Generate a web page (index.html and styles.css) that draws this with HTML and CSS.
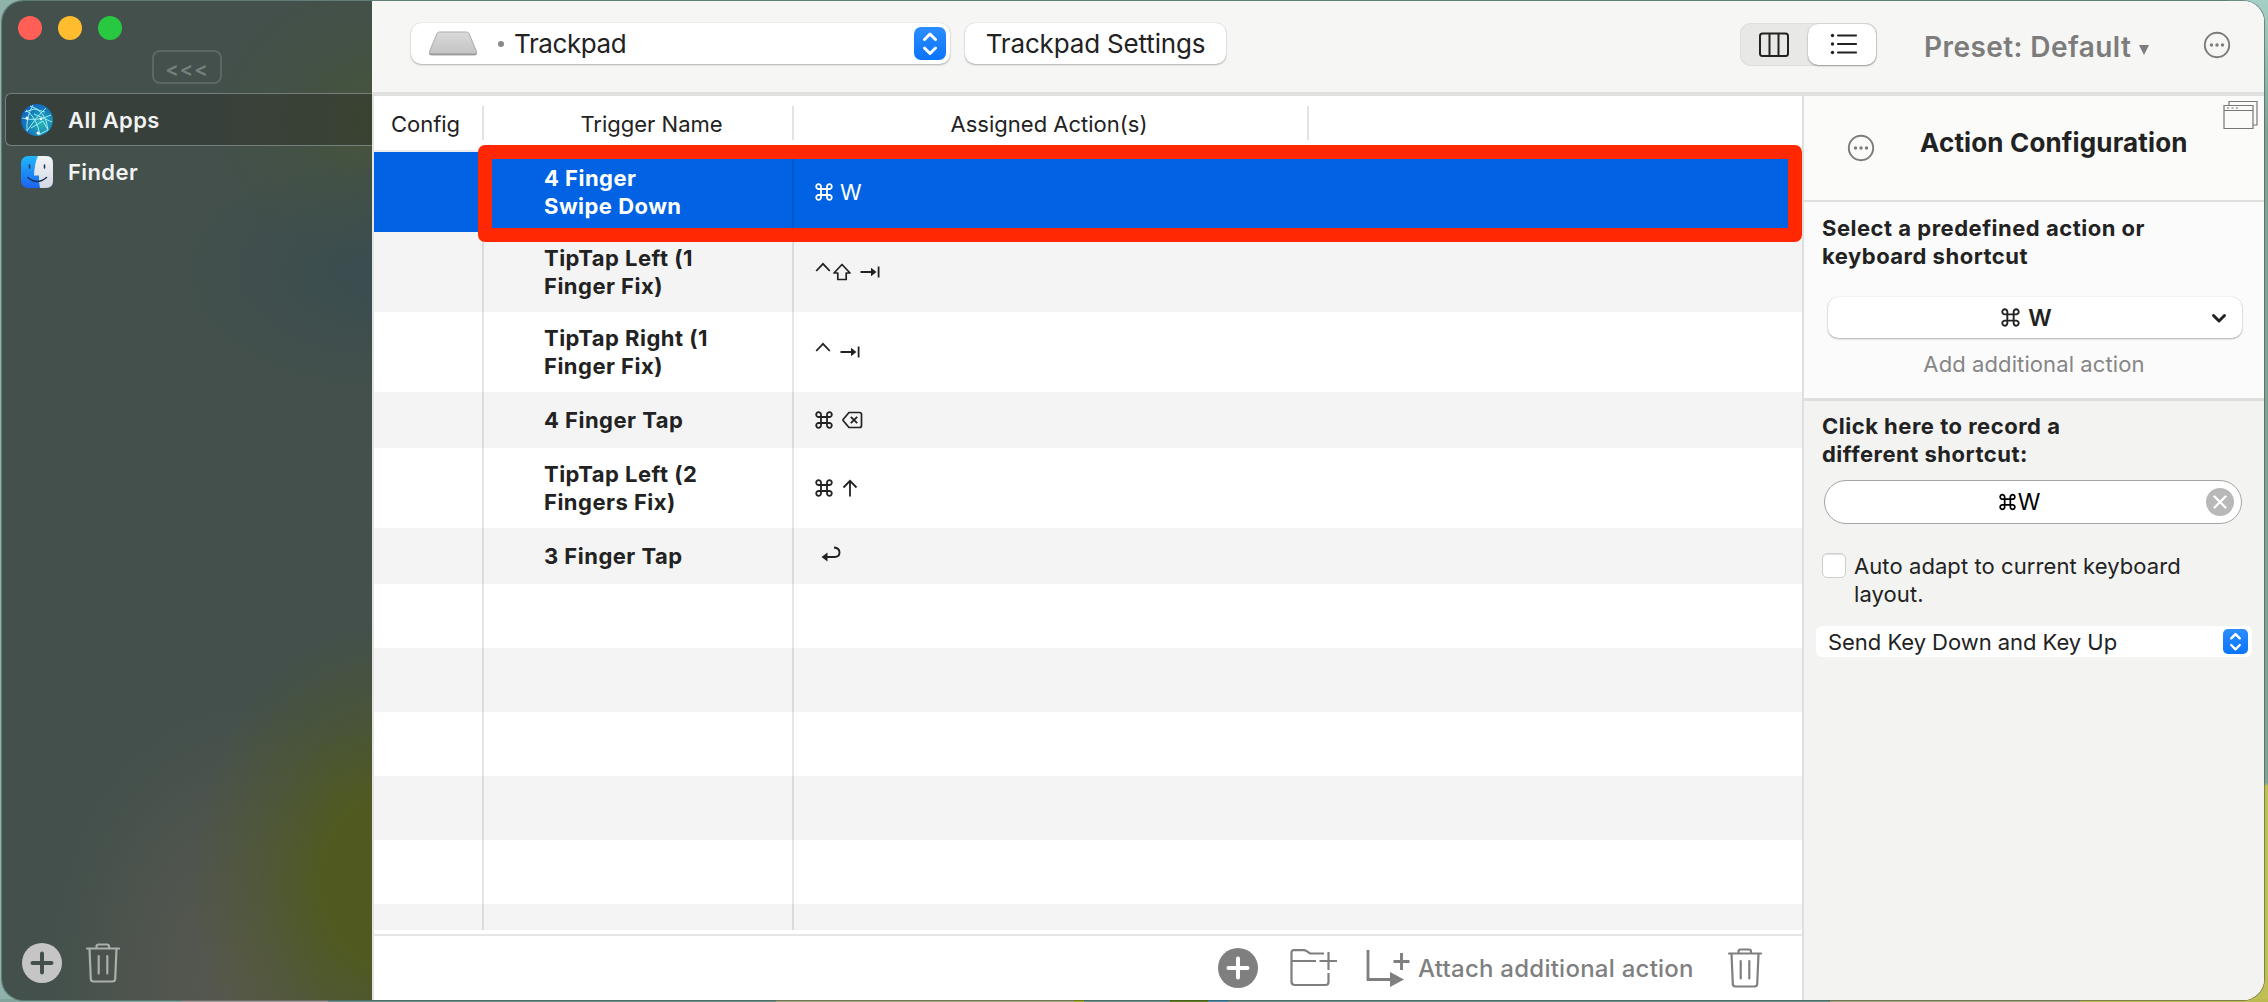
FILE: index.html
```
<!DOCTYPE html>
<html lang="en">
<head>
<meta charset="utf-8">
<title>Trackpad</title>
<link rel="stylesheet" href="styles.css">
</head>
<body>
<svg class="defs" width="0" height="0">
  <symbol id="cmd" viewBox="0 0 18 18"><path d="M6 6h6v6H6zM6 6H3.700A2.400 2.400 0 1 1 6 3.600zM12 6V3.600A2.400 2.400 0 1 1 14.300 6zM12 12h2.300A2.400 2.400 0 1 1 12 14.400zM6 12v2.400A2.400 2.400 0 1 1 3.700 12z" fill="none" stroke="currentColor" stroke-width="1.800"/></symbol>
  <symbol id="ctrl" viewBox="0 0 16 18"><path d="M1.200 9 8 1.800 14.800 9" fill="none" stroke="currentColor" stroke-width="1.800"/></symbol>
  <symbol id="tab" viewBox="0 0 20 18"><path d="M0.500 9h13M18.600 3.500v11" fill="none" stroke="currentColor" stroke-width="1.800"/><path d="M11 4.800 16.500 9 11 13.200z" fill="currentColor"/></symbol>
  <symbol id="dots" viewBox="0 0 28 28"><circle cx="14" cy="14" r="12.200" fill="none" stroke="currentColor" stroke-width="1.900"/><circle cx="8.500" cy="14" r="1.700" fill="currentColor"/><circle cx="14" cy="14" r="1.700" fill="currentColor"/><circle cx="19.500" cy="14" r="1.700" fill="currentColor"/></symbol>
  <symbol id="trash" viewBox="0 0 34 40"><path d="M1 5.500h32M10.500 5V3.500Q10.500 1.500 12.500 1.500h8.500Q23 1.500 23 3.500V5M3.500 6l1.300 30Q5 38.500 7.500 38.500h19Q29 38.500 29.200 36l1.300-30M12.700 13v17.500M21.300 13v17.500" fill="none" stroke="currentColor" stroke-width="2.200" stroke-linecap="round"/></symbol>
  <symbol id="updown" viewBox="0 0 32 32"><path d="M10.500 12 16 6.500 21.500 12M10.500 20.500 16 26 21.500 20.500" fill="none" stroke="#fff" stroke-width="3" stroke-linecap="round" stroke-linejoin="round"/></symbol>
</svg>

<div class="window">
  <aside class="sidebar">
    <div class="lights"><i class="red"></i><i class="yellow"></i><i class="green"></i></div>
    <button class="collapse">&lt;&lt;&lt;</button>
    <div class="app selected">
      <svg width="32" height="32" viewBox="0 0 32 32">
        <defs><radialGradient id="globe" cx=".62" cy=".6" r=".65"><stop offset="0" stop-color="#2bb5b4"/><stop offset=".6" stop-color="#1784b8"/><stop offset="1" stop-color="#1260c4"/></radialGradient></defs>
        <circle cx="16" cy="16" r="16" fill="url(#globe)"/>
        <path d="M5 6Q16 14 19 31M1 14Q16 18 30 11M9 2Q25 6 27 26M6 27Q14 14 25 4M12 1Q5 13 6 27M13 10 31 18M4 8 13 5 24 8M17 31 27 26 22 17 10 24" fill="none" stroke="#9beaf5" stroke-width="1"/>
        <circle cx="6" cy="14" r="1.500" fill="#fff"/><circle cx="20" cy="15" r="1.300" fill="#fff"/><circle cx="17" cy="29" r="1.500" fill="#fff"/>
      </svg>
      <span>All Apps</span>
    </div>
    <div class="app">
      <svg width="32" height="32" viewBox="0 0 32 32">
        <defs><linearGradient id="fb" x2="0" y2="1"><stop offset="0" stop-color="#1fb8fb"/><stop offset="1" stop-color="#1c62f2"/></linearGradient><linearGradient id="fw" x2="0" y2="1"><stop offset="0" stop-color="#f2f3f7"/><stop offset="1" stop-color="#d5d8e2"/></linearGradient></defs>
        <rect width="32" height="32" rx="7" fill="url(#fb)"/>
        <path d="M17 0h8q7 0 7 7v18q0 7-7 7h-6q-1.300-6-1-12.500h-5Q13.500 7 17 0z" fill="url(#fw)"/>
        <path d="M8.500 9v3M23.500 9v3M7 21.500q9 8 18.500 0" fill="none" stroke="#16324f" stroke-width="1.500" stroke-linecap="round"/>
      </svg>
      <span>Finder</span>
    </div>
    <div class="side-tools">
      <svg width="40" height="40" viewBox="0 0 40 40"><circle cx="20" cy="20" r="20" fill="#c5c5c5"/><path d="M20 10.500v19M10.500 20h19" stroke="#43504c" stroke-width="4" stroke-linecap="round"/></svg>
      <svg width="34" height="40"><use href="#trash"/></svg>
    </div>
  </aside>

  <div class="content">
    <header class="toolbar">
      <div class="select device">
        <svg width="50" height="26" viewBox="0 0 50 26"><defs><linearGradient id="pad" x2="0" y2="1"><stop offset="0" stop-color="#dadada"/><stop offset="1" stop-color="#c2c2c2"/></linearGradient></defs><path d="M9 2.500Q9.700 1 11.500 1h27q1.800 0 2.500 1.500l7.500 18v1.500q0 2-2 2h-43q-2 0-2-2v-1.500z" fill="url(#pad)" stroke="#aaa"/><path d="M1.500 23.300h47" stroke="#999" stroke-width="1.500"/></svg>
        <i class="bullet"></i>
        <span class="device-name">Trackpad</span>
        <svg class="stepper" width="32" height="33"><use href="#updown"/></svg>
      </div>
      <button class="settings">Trackpad Settings</button>
      <div class="segments">
        <div class="seg"><svg width="32" height="26" viewBox="0 0 32 26"><path d="M4.500 1.500h23q2.500 0 2.500 2.500v17.500q0 2.500-2.500 2.500h-23Q2 24 2 21.500V4q0-2.500 2.500-2.500zM11.500 1.500V24M20.500 1.500V24" fill="none" stroke="#222" stroke-width="2"/></svg></div>
        <div class="seg on"><svg width="28" height="24" viewBox="0 0 28 24"><path d="M8 3.500h18M8 12h18M8 20.500h18" stroke="#222" stroke-width="2.200" stroke-linecap="round"/><g fill="#222"><circle cx="2.500" cy="3.500" r="1.700"/><circle cx="2.500" cy="12" r="1.700"/><circle cx="2.500" cy="20.500" r="1.700"/></g></svg></div>
      </div>
      <div class="preset"><span>Preset: Default</span><i></i></div>
      <svg class="more" width="28" height="28"><use href="#dots"/></svg>
    </header>

    <div class="body">
      <main class="main">
        <div class="thead"><div class="c1">Config</div><div class="c2">Trigger Name</div><div class="c3">Assigned Action(s)</div><div class="c4"></div></div>
        <div class="rows">
          <div class="row tall active"><b class="c1"></b><b class="c2">4 Finger<br>Swipe Down</b><span class="keys"><svg width="18" height="18"><use href="#cmd"/></svg><em>W</em></span></div>
          <div class="row tall"><b class="c1"></b><b class="c2">TipTap Left (1<br>Finger Fix)</b><span class="keys"><svg width="16" height="18" class="hi"><use href="#ctrl"/></svg><svg class="shift" width="18" height="18" viewBox="0 0 18 18"><path d="M9 1.500 17 10h-3.800v6.500H4.800V10H1z" fill="none" stroke="currentColor" stroke-width="1.700" stroke-linejoin="round"/></svg><svg class="gap" width="20" height="18"><use href="#tab"/></svg></span></div>
          <div class="row tall"><b class="c1"></b><b class="c2">TipTap Right (1<br>Finger Fix)</b><span class="keys"><svg width="16" height="18" class="hi"><use href="#ctrl"/></svg><svg class="gap" width="20" height="18"><use href="#tab"/></svg></span></div>
          <div class="row short"><b class="c1"></b><b class="c2">4 Finger Tap</b><span class="keys"><svg width="18" height="18"><use href="#cmd"/></svg><svg class="gap" width="21" height="18" viewBox="0 0 21 18"><path d="M7 1.500h10.500q2 0 2 2v11q0 2-2 2H7L1.300 9.800q-.6-.8 0-1.600z" fill="none" stroke="currentColor" stroke-width="1.700" stroke-linejoin="round"/><path d="m8.800 5.800 6.400 6.400M15.200 5.800 8.800 12.200" stroke="currentColor" stroke-width="1.800"/></svg></span></div>
          <div class="row tall"><b class="c1"></b><b class="c2">TipTap Left (2<br>Fingers Fix)</b><span class="keys"><svg width="18" height="18"><use href="#cmd"/></svg><svg class="gap" width="16" height="18" viewBox="0 0 16 18"><path d="M8 17.500V2M1.500 8.500 8 1.800 14.500 8.500" fill="none" stroke="currentColor" stroke-width="1.800"/></svg></span></div>
          <div class="row short"><b class="c1"></b><b class="c2">3 Finger Tap</b><span class="keys"><svg class="return" width="20" height="18" viewBox="0 0 20 18"><path d="M5 12h8.500Q18.500 12 18.500 7.500T13 2.500" fill="none" stroke="currentColor" stroke-width="1.900"/><path d="M0.500 12 6.500 7.500v9z" fill="currentColor"/></svg></span></div>
          <div class="row"></div><div class="row"></div><div class="row"></div><div class="row"></div><div class="row"></div><div class="row"></div>
          <i class="rule first"></i><i class="rule second"></i>
          <div class="highlight"></div>
        </div>
        <footer class="actions">
          <svg width="40" height="40" viewBox="0 0 40 40"><circle cx="20" cy="20" r="20" fill="#7f7f7f"/><path d="M20 10.500v19M10.500 20h19" stroke="#fff" stroke-width="4" stroke-linecap="round"/></svg>
          <svg class="folder" width="48" height="38" viewBox="0 0 48 38"><path d="M34 4.500H20l-4-2.800Q15 1.200 14 1.200H4q-2.500 0-2.500 2.500v29Q1.500 36 5 36h30.500q3 0 3-3V24M1.500 12H26M29.500 12H47M38.500 3v18" fill="none" stroke="#7f7f7f" stroke-width="2.200"/></svg>
          <svg class="attach" width="44" height="38" viewBox="0 0 44 38"><path d="M2 1v29.500h24" fill="none" stroke="#7f7f7f" stroke-width="2.800"/><path d="M24 23 38 30.500 24 38z" fill="#7f7f7f"/><path d="M35.500 4v17M27.500 12.500H43.500" stroke="#7f7f7f" stroke-width="2.900"/></svg>
          <span class="attach-text">Attach additional action</span>
          <svg class="bin" width="34" height="40"><use href="#trash"/></svg>
        </footer>
      </main>

      <aside class="panel">
        <div class="panel-head">
          <svg class="dots" width="28" height="28"><use href="#dots"/></svg>
          <h2>Action Configuration</h2>
          <svg class="windows" width="36" height="30" viewBox="0 0 36 30"><path d="M1 5.500h29v23H1zM1 10.500h29M6 5V1.500h28v23.500h-3.500" fill="none" stroke="#777" stroke-width="1.200"/><path d="M4 8h2M8.500 8h2M13 8h2" stroke="#999" stroke-width="1.500"/></svg>
        </div>
        <div class="predefined">
          <p class="label">Select a predefined action or<br>keyboard shortcut</p>
          <div class="popup"><span class="combo"><svg width="19" height="19"><use href="#cmd"/></svg><em>W</em></span><svg class="chev" width="16" height="11" viewBox="0 0 16 11"><path d="M2.500 2.500 8 8l5.500-5.500" fill="none" stroke="#222" stroke-width="3" stroke-linecap="round" stroke-linejoin="round"/></svg></div>
          <div class="add">Add additional action</div>
        </div>
        <div class="record">
          <p class="label">Click here to record a<br>different shortcut:</p>
          <div class="recorder"><span class="combo"><svg width="17" height="18"><use href="#cmd"/></svg><em>W</em></span><svg class="clear" width="28" height="28" viewBox="0 0 28 28"><circle cx="14" cy="14" r="14" fill="#b8b8b8"/><path d="m8.500 8.500 11 11M19.500 8.500l-11 11" stroke="#fff" stroke-width="2.400" stroke-linecap="round"/></svg></div>
          <label class="check"><i></i><span>Auto adapt to current keyboard<br>layout.</span></label>
          <div class="select send"><span>Send Key Down and Key Up</span><svg class="stepper small" width="25" height="25"><use href="#updown"/></svg></div>
        </div>
      </aside>
    </div>
  </div>
</div>
</body>
</html>
```
FILE: styles.css
```
* { box-sizing: border-box; }
html, body { margin: 0; height: 100%; }
body {
  width: 2268px; height: 1002px; padding: 1px 4px 2px 2px; overflow: hidden;
  font: 22px/28px Inter, "Liberation Sans", sans-serif; color: #222;
  background:
    linear-gradient(90deg, #82a49c 0 182px, #a39b99 182px 328px, #6f928a 328px 776px, #a5a67d 776px 1074px, #a8b018 1074px 1084px, #6d918a 1084px 1170px, #5f7d12 1170px 1208px, #4a8cb0 1208px 1228px, #6d918a 1228px 1830px, #a5a67d 1830px 2080px, #bdbb50 2080px) 0 100% / 100% 3px no-repeat,
    linear-gradient(#a5cfc6 0, #80a396 130px 783px, #c0bf56 786px) 100% 0 / 40px 100% no-repeat,
    #8fb2ab;
}
svg { display: block; flex: none; }
.defs { position: absolute; }
button { font: inherit; color: inherit; border: 0; padding: 0; margin: 0; }
em, i { font-style: normal; }
span { white-space: nowrap; }
.window { display: flex; height: 999px; border-radius: 21px; overflow: hidden; box-shadow: 0 0 0 1px rgba(40, 60, 55, .45); }

.sidebar {
  width: 370px; flex: none; display: flex; flex-direction: column; padding: 15px 0 17px; color: #f1f3f2;
  background:
    radial-gradient(ellipse 190px 260px at 380px 880px, #505a20 30%, rgba(80, 90, 32, .45) 62%, rgba(80, 90, 32, 0) 100%),
    radial-gradient(ellipse 200px 290px at 240px 985px, #57584f 0, rgba(87, 88, 79, .6) 50%, rgba(87, 88, 79, 0) 100%),
    radial-gradient(ellipse 200px 120px at 380px 270px, rgba(56, 76, 80, .9) 0, rgba(56, 76, 80, .4) 50%, rgba(56, 76, 80, 0) 100%),
    radial-gradient(ellipse 180px 150px at 380px 120px, #46543a 0, rgba(70, 84, 58, .4) 50%, rgba(70, 84, 58, 0) 100%),
    #43504c;
}
.lights { display: flex; gap: 16px; padding-left: 16px; }
.lights i { width: 24px; height: 24px; border-radius: 50%; }
.red { background: #ff5f57; } .yellow { background: #febc2e; } .green { background: #28c840; }
.collapse { width: 70px; height: 34px; margin: 10px 0 9px 150px; border: 2px solid #5d6865; border-radius: 8px; background: none; color: #75807c; font: 600 20px/35px Inter, sans-serif; letter-spacing: 1px; }
.app { display: flex; align-items: center; height: 52px; padding-left: 19px; gap: 15px; font-weight: 600; letter-spacing: .4px; }
.app.selected { margin-left: 3px; padding-left: 15px; height: 53px; border: 1px solid #75807c; border-right: 0; border-radius: 6px 0 0 6px; background: rgba(40, 40, 35, .38); }
.side-tools { margin-top: auto; display: flex; align-items: center; padding-left: 20px; gap: 24px; color: #a9b0ae; }

.content { flex: 1; display: flex; flex-direction: column; min-width: 0; background: #fff; }
.toolbar { height: 95px; flex: none; display: flex; align-items: flex-start; padding: 22px 33px 0 39px; background: #f6f6f4; border-bottom: 4px solid #e0e0de; }
.select { display: flex; align-items: center; background: #fff; box-shadow: 0 1px 2px rgba(0, 0, 0, .28), 0 0 1px rgba(0, 0, 0, .2); }
.device { width: 539px; height: 41px; padding: 0 4px 0 17px; border-radius: 10px; }
.device-name { font-size: 26px; letter-spacing: -.4px; }
.bullet { width: 6px; height: 6px; border-radius: 50%; background: #8a8a8a; margin: 0 10px 0 20px; }
.stepper { margin-left: auto; border-radius: 7px; background: linear-gradient(#2b8dff, #0a74fb); }
.settings { width: 261px; height: 41px; margin-left: 15px; border-radius: 10px; background: #fff; box-shadow: 0 1px 2px rgba(0, 0, 0, .28), 0 0 1px rgba(0, 0, 0, .2); font-size: 26px; letter-spacing: -.16px; }
.segments { display: flex; width: 137px; height: 43px; margin-left: 514px; border-radius: 11px; background: #e8e8e6; box-shadow: inset 0 0 0 1px #dfdfdd; padding: 1px; }
.seg { flex: 1; display: flex; align-items: center; justify-content: center; padding-right: 2px; }
.seg.on { padding: 0 0 2px 3px; background: #fff; border-radius: 10px; box-shadow: 0 1px 2px rgba(0, 0, 0, .3), 0 0 1px rgba(0, 0, 0, .25); }
.preset { display: flex; align-items: center; margin: 10px 0 0 47px; font-weight: 600; font-size: 28px; letter-spacing: .42px; color: #7c7c7c; }
.preset i { border: 5px solid transparent; border-top: 10px solid #7c7c7c; border-bottom: 0; margin: 5px 0 0 8px; }
.more { color: #7c7c7c; margin: 8px 0 0 auto; }

.body { flex: 1; display: flex; min-height: 0; }
.main { width: 1430px; flex: none; display: flex; flex-direction: column; border-left: 2px solid #e3e3e1; }
.thead { height: 56px; flex: none; display: flex; align-items: center; border-bottom: 2px solid #ececec; text-align: center; }
.thead div { height: 34px; line-height: 36px; }
.c1 { width: 108px; flex: none; }
.thead .c1 { padding-right: 5px; }
.thead .c2 { width: 310px; padding-left: 27px; border-left: 2px solid #e2e2e2; }
.thead .c3 { width: 515px; padding-right: 3px; border-left: 2px solid #e2e2e2; }
.thead .c4 { flex: 1; border-left: 2px solid #e2e2e2; }
.rows { position: relative; height: 778px; flex: none; }
.row { display: flex; align-items: center; height: 64px; }
.row:nth-child(even) { background: #f4f4f4; }
.row:nth-child(12) { height: 26px; }
.row.tall { height: 80px; }
.row.short { height: 56px; }
.row.active { background: #0163e3; color: #fff; }
.row .c2 { width: 310px; padding-left: 62px; white-space: nowrap; letter-spacing: .48px; }
.keys { display: flex; align-items: center; padding-left: 23px; }
.keys em { margin-left: 7px; }
.keys .gap { margin-left: 9px; }
.hi { margin-top: -2px; }
.shift { margin-left: 2px; }
.return { margin: -5px 0 0 6px; }
.rule { position: absolute; top: 0; width: 2px; height: 778px; background: rgba(0, 0, 0, .1); }
.rule.first { left: 108px; } .rule.second { left: 418px; }
.highlight { position: absolute; left: 104px; top: -7px; width: 1324px; height: 97px; border: 14px solid #ff2802; border-radius: 7px; }
.actions { flex: 1; display: flex; align-items: center; margin-top: 4px; border-top: 2px solid #e6e6e6; padding-left: 844px; color: #7f7f7f; }
.folder { margin-left: 32px; }
.attach { margin-left: 28px; }
.attach-text { font-size: 24px; font-weight: 500; margin: 2px 0 0 8px; letter-spacing: .25px; }
.actions .bin { margin-left: 34px; }

.panel { flex: 1; display: flex; flex-direction: column; border-left: 2px solid #dfdfdf; background: #f3f3f1; }
.panel-head { display: flex; align-items: flex-start; height: 106px; background: #fbfbfa; border-bottom: 2px solid #dfdfde; color: #7c7c7c; }
.panel-head .dots { margin: 38px 0 0 43px; }
h2 { margin: 33px 0 0 45px; font-size: 26px; line-height: 28px; font-weight: 700; letter-spacing: .15px; white-space: nowrap; color: #222; }
.windows { margin: 4px 5px 0 auto; }
.predefined { height: 199px; padding: 12px 0 0 18px; background: #fbfbfb; border-bottom: 3px solid #dededd; }
.label { margin: 0; font-weight: 700; letter-spacing: .5px; }
.popup { position: relative; display: flex; align-items: center; justify-content: center; width: 414px; height: 41px; margin: 27px 0 0 6px; padding-right: 17px; border-radius: 10px; background: #fff; box-shadow: 0 1px 2px rgba(0, 0, 0, .3), 0 0 1px rgba(0, 0, 0, .2); }
.combo { display: flex; align-items: center; font-weight: 600; font-size: 23px; }
.combo em { margin-left: 8px; }
.chev { position: absolute; right: 15px; top: 16px; }
.add { margin: 12px 0 0 2px; width: 420px; text-align: center; letter-spacing: .1px; color: #868686; }
.record { padding: 11px 0 0 18px; }
.recorder { position: relative; display: flex; align-items: center; justify-content: center; width: 418px; height: 44px; margin: 12px 0 0 2px; padding-right: 27px; border: 1px solid #a5a5a5; border-radius: 22px; background: #fff; color: #000; }
.recorder .combo { font-weight: 400; }
.recorder .combo em { margin-left: 2px; }
.clear { position: absolute; right: 7px; top: 7px; }
.check { display: flex; margin-top: 29px; gap: 8px; align-items: flex-start; letter-spacing: .08px; }
.check i { width: 24px; height: 25px; border: 1px solid #cfcfcf; border-radius: 5px; background: #fff; box-shadow: inset 0 1px 1px rgba(0, 0, 0, .12); }
.check span { margin-top: -1px; }
.send { width: 436px; height: 31px; margin: 18px 0 0 -6px; padding: 0 4px 0 12px; border-radius: 6px; box-shadow: none; letter-spacing: -.04px; }
.small { border-radius: 5px; }
```
